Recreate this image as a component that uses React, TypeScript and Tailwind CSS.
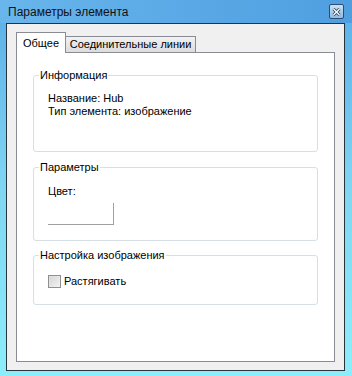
import React from "react";

const font = { fontFamily: '"Liberation Sans", Arial, sans-serif' };

function Group({ title, height, children }: { title: string; height: number; children?: React.ReactNode }) {
  return (
    <fieldset
      className="mx-[16px] rounded-[3px] border border-[#d5dfe5] px-0"
      style={{ height }}
    >
      <legend className="ml-[5px] px-[1px] leading-[15px] text-black">{title}</legend>
      <div className="pl-[14px]">{children}</div>
    </fieldset>
  );
}

export default function App() {
  return (
    <div
      className="flex h-[376px] w-[352px] flex-col overflow-hidden bg-gradient-to-b from-[#5aaee8] via-[#7fd6f2] to-[#8ceefa] text-[11px] text-black"
      style={font}
    >
      {/* Title bar */}
      <div className="flex h-[23px] shrink-0 items-start justify-between bg-gradient-to-r from-[#69b6ec] via-[#5ba9e6] to-[#4f9fe0] pl-[8px] pr-[8px]">
        <span className="mt-[4px] whitespace-nowrap text-[12px] leading-[16px] text-[#111]">Параметры элемента</span>
        <div className="mt-[4px] flex h-[15px] w-[15px] items-center justify-center rounded-[2px] border border-[#2f4d74] bg-gradient-to-b from-[#c9e1f6] to-[#8fbbe3]">
          <svg width="9" height="8" viewBox="0 0 9 8">
            <path d="M1.5 1 L7.5 7 M7.5 1 L1.5 7" stroke="#2b3b55" strokeWidth="3" />
            <path d="M1.5 1 L7.5 7 M7.5 1 L1.5 7" stroke="#ffffff" strokeWidth="1.4" />
          </svg>
        </div>
      </div>

      {/* Client area */}
      <div className="ml-[6px] flex h-[348px] w-[339px] flex-col border border-[#27343c] bg-[#f0f0f0] px-[9px] pb-[8px] pt-[8px]">
        {/* Tabs */}
        <div className="relative z-10 flex h-[21px] items-end">
          <div className="flex h-[21px] w-[50px] items-start justify-center border border-b-0 border-[#898c95] bg-white pt-[3px] leading-[15px]">
            Общее
          </div>
          <div className="mb-[1px] flex h-[16px] w-[130px] items-center justify-center whitespace-nowrap border border-b-0 border-l-0 border-[#898c95] bg-gradient-to-b from-[#f2f2f2] to-[#dcdcdc] leading-[15px]">
            Соединительные линии
          </div>
        </div>
        {/* Panel */}
        <div className="-mt-[1px] flex flex-1 flex-col border border-[#898c95] bg-white pt-[15px]">
          <Group title="Информация" height={84}>
            <div className="mt-[9px] whitespace-nowrap leading-[13px]">
              <div>Название: Hub</div>
              <div>Тип элемента: изображение</div>
            </div>
          </Group>
          <div className="h-[8px]" />
          <Group title="Параметры" height={81}>
            <div className="mt-[10px] leading-[13px]">Цвет:</div>
            <div className="mt-[5px] h-[22px] w-[66px] border-b border-r border-[#a0a0a0]" />
          </Group>
          <div className="h-[7px]" />
          <Group title="Настройка изображения" height={57}>
            <div className="mt-[12px] flex items-center gap-[3px]">
              <div className="flex h-[13px] w-[13px] items-center justify-center border border-[#8f8f8f] bg-gradient-to-br from-[#dcdcdc] to-[#f4f4f4]">
                <div className="h-[9px] w-[9px] bg-gradient-to-br from-[#d8d8d8] to-[#f0f0f0]" />
              </div>
              <span className="leading-[13px]">Растягивать</span>
            </div>
          </Group>
        </div>
      </div>
    </div>
  );
}
